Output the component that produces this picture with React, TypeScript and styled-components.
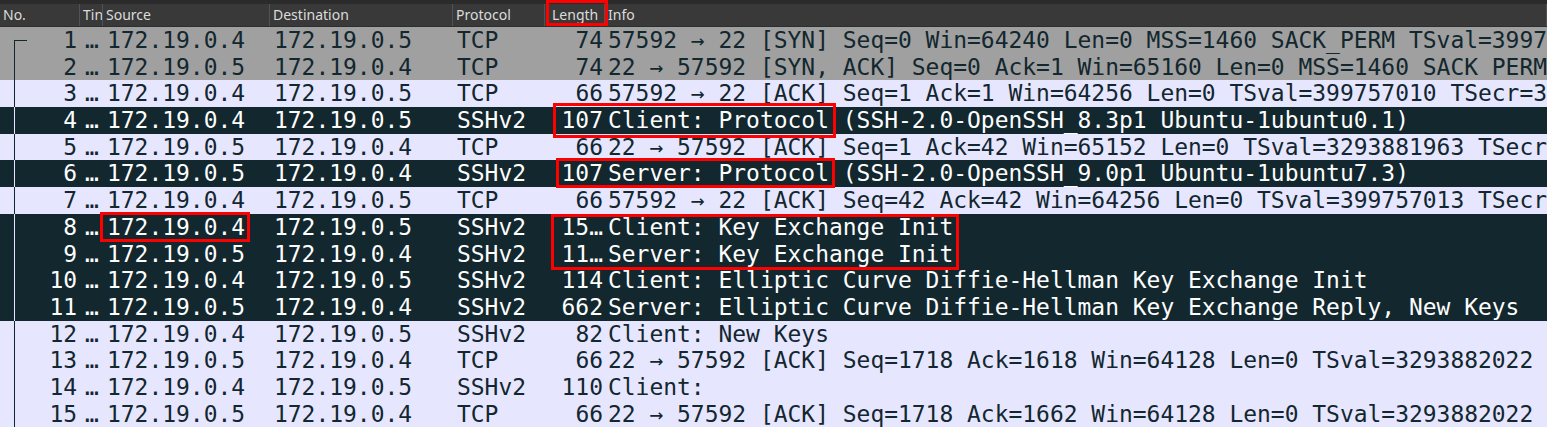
import React from "react";
import styled, { createGlobalStyle, css } from "styled-components";

const GlobalStyle = createGlobalStyle`
  html, body { margin: 0; padding: 0; background: #e7e6ff; overflow: hidden; }
  #root { width: 1547px; height: 427px; }
`;

type Kind = "syn" | "tcp" | "ssh";

interface Pkt {
  no: number;
  src: string;
  dst: string;
  proto: string;
  len: string;
  info: string;
  kind: Kind;
}

const packets: Pkt[] = [
  { no: 1, src: "172.19.0.4", dst: "172.19.0.5", proto: "TCP", len: "74", kind: "syn", info: "57592 → 22 [SYN] Seq=0 Win=64240 Len=0 MSS=1460 SACK_PERM TSval=399757010 TSecr=0 WS=128" },
  { no: 2, src: "172.19.0.5", dst: "172.19.0.4", proto: "TCP", len: "74", kind: "syn", info: "22 → 57592 [SYN, ACK] Seq=0 Ack=1 Win=65160 Len=0 MSS=1460 SACK_PERM TSval=3293881963" },
  { no: 3, src: "172.19.0.4", dst: "172.19.0.5", proto: "TCP", len: "66", kind: "tcp", info: "57592 → 22 [ACK] Seq=1 Ack=1 Win=64256 Len=0 TSval=399757010 TSecr=3293881963" },
  { no: 4, src: "172.19.0.4", dst: "172.19.0.5", proto: "SSHv2", len: "107", kind: "ssh", info: "Client: Protocol (SSH-2.0-OpenSSH_8.3p1 Ubuntu-1ubuntu0.1)" },
  { no: 5, src: "172.19.0.5", dst: "172.19.0.4", proto: "TCP", len: "66", kind: "tcp", info: "22 → 57592 [ACK] Seq=1 Ack=42 Win=65152 Len=0 TSval=3293881963 TSecr=399757010" },
  { no: 6, src: "172.19.0.5", dst: "172.19.0.4", proto: "SSHv2", len: "107", kind: "ssh", info: "Server: Protocol (SSH-2.0-OpenSSH_9.0p1 Ubuntu-1ubuntu7.3)" },
  { no: 7, src: "172.19.0.4", dst: "172.19.0.5", proto: "TCP", len: "66", kind: "tcp", info: "57592 → 22 [ACK] Seq=42 Ack=42 Win=64256 Len=0 TSval=399757013 TSecr=3293881966" },
  { no: 8, src: "172.19.0.4", dst: "172.19.0.5", proto: "SSHv2", len: "15…", kind: "ssh", info: "Client: Key Exchange Init" },
  { no: 9, src: "172.19.0.5", dst: "172.19.0.4", proto: "SSHv2", len: "11…", kind: "ssh", info: "Server: Key Exchange Init" },
  { no: 10, src: "172.19.0.4", dst: "172.19.0.5", proto: "SSHv2", len: "114", kind: "ssh", info: "Client: Elliptic Curve Diffie-Hellman Key Exchange Init" },
  { no: 11, src: "172.19.0.5", dst: "172.19.0.4", proto: "SSHv2", len: "662", kind: "ssh", info: "Server: Elliptic Curve Diffie-Hellman Key Exchange Reply, New Keys" },
  { no: 12, src: "172.19.0.4", dst: "172.19.0.5", proto: "SSHv2", len: "82", kind: "tcp", info: "Client: New Keys" },
  { no: 13, src: "172.19.0.5", dst: "172.19.0.4", proto: "TCP", len: "66", kind: "tcp", info: "22 → 57592 [ACK] Seq=1718 Ack=1618 Win=64128 Len=0 TSval=3293882022" },
  { no: 14, src: "172.19.0.4", dst: "172.19.0.5", proto: "SSHv2", len: "110", kind: "tcp", info: "Client:" },
  { no: 15, src: "172.19.0.5", dst: "172.19.0.4", proto: "TCP", len: "66", kind: "tcp", info: "22 → 57592 [ACK] Seq=1718 Ack=1662 Win=64128 Len=0 TSval=3293882022" },
];

const palette: Record<Kind, { bg: string; fg: string; line: string }> = {
  syn: { bg: "#a0a0a0", fg: "#12272e", line: "#12272e" },
  tcp: { bg: "#e7e6ff", fg: "#12272e", line: "#12272e" },
  ssh: { bg: "#12272e", fg: "#fdfdfd", line: "#e7e6ff" },
};

const COLS = [80, 23, 167, 183, 92, 60];

const Page = styled.div`
  position: relative;
  width: 1547px;
  height: 427px;
  overflow: hidden;
  background: #e7e6ff;
`;

const TopStrip = styled.div`
  height: 4px;
  background: #2b2b2b;
`;

const Header = styled.div`
  display: flex;
  height: 22px;
  background: #393939;
  border-bottom: 1px solid #2e2e2e;
  font-family: "Noto Sans", "DejaVu Sans", sans-serif;
  font-size: 14px;
  color: #dcdcdc;
`;

const HeadCell = styled.div<{ $w?: number; $pl?: number }>`
  ${(p) => (p.$w ? css`width: ${p.$w}px; flex: none;` : css`flex: 1;`)}
  box-sizing: border-box;
  padding-left: ${(p) => p.$pl ?? 3}px;
  line-height: 21px;
  white-space: nowrap;
  overflow: hidden;
  text-overflow: clip;
  border-right: 1px solid #525252;
`;

const Body = styled.div`
  display: flex;
  flex-direction: column;
`;

const Row = styled.div<{ $kind: Kind }>`
  display: flex;
  height: 26.7px;
  background: ${(p) => palette[p.$kind].bg};
  color: ${(p) => palette[p.$kind].fg};
  font-family: "DejaVu Sans Mono", "Liberation Mono", monospace;
  font-size: 22.95px;
  line-height: 26.7px;
  white-space: nowrap;
`;

const Cell = styled.div<{ $w?: number; $right?: boolean; $pl?: number; $pr?: number }>`
  ${(p) => (p.$w ? css`width: ${p.$w}px; flex: none;` : css`flex: 1; min-width: 0;`)}
  box-sizing: border-box;
  overflow: hidden;
  text-align: ${(p) => (p.$right ? "right" : "left")};
  padding-left: ${(p) => p.$pl ?? 4}px;
  padding-right: ${(p) => p.$pr ?? 0}px;
`;

const NoCell = styled(Cell)<{ $kind: Kind; $first: boolean }>`
  position: relative;
  &::before {
    content: "";
    position: absolute;
    left: 14px;
    width: 1px;
    top: ${(p) => (p.$first ? "13px" : "0")};
    bottom: 0;
    background: ${(p) => palette[p.$kind].line};
  }
  &::after {
    content: "";
    position: absolute;
    left: 14px;
    top: 13px;
    width: ${(p) => (p.$first ? "13px" : "0")};
    height: 1px;
    background: ${(p) => palette[p.$kind].line};
  }
`;

const Mark = styled.div`
  position: absolute;
  box-sizing: border-box;
  border: 3px solid #ff0000;
  pointer-events: none;
`;

const marks = [
  { x: 546, y: 0, w: 62, h: 26 },
  { x: 553, y: 103, w: 283, h: 35 },
  { x: 556, y: 158, w: 279, h: 30 },
  { x: 100, y: 212, w: 150, h: 30 },
  { x: 551, y: 214, w: 408, h: 56 },
];

export default function App() {
  return (
    <>
      <GlobalStyle />
      <Page>
        <TopStrip />
        <Header>
          <HeadCell $w={COLS[0]}>No.</HeadCell>
          <HeadCell $w={COLS[1]}>Tin</HeadCell>
          <HeadCell $w={COLS[2]}>Source</HeadCell>
          <HeadCell $w={COLS[3]}>Destination</HeadCell>
          <HeadCell $w={COLS[4]}>Protocol</HeadCell>
          <HeadCell $w={COLS[5]} $pl={7}>Length</HeadCell>
          <HeadCell>Info</HeadCell>
        </Header>
        <Body>
          {packets.map((p, i) => (
            <Row key={p.no} $kind={p.kind}>
              <NoCell $w={COLS[0]} $right $pr={3} $kind={p.kind} $first={i === 0}>
                {p.no}
              </NoCell>
              <Cell $w={COLS[1]} $pl={5}>…</Cell>
              <Cell $w={COLS[2]} $pl={4}>{p.src}</Cell>
              <Cell $w={COLS[3]} $pl={4}>{p.dst}</Cell>
              <Cell $w={COLS[4]} $pl={4}>{p.proto}</Cell>
              <Cell $w={COLS[5]} $right $pl={0} $pr={2}>{p.len}</Cell>
              <Cell $pl={3}>{p.info}</Cell>
            </Row>
          ))}
        </Body>
        {marks.map((m, i) => (
          <Mark key={i} style={{ left: m.x, top: m.y, width: m.w, height: m.h }} />
        ))}
      </Page>
    </>
  );
}
